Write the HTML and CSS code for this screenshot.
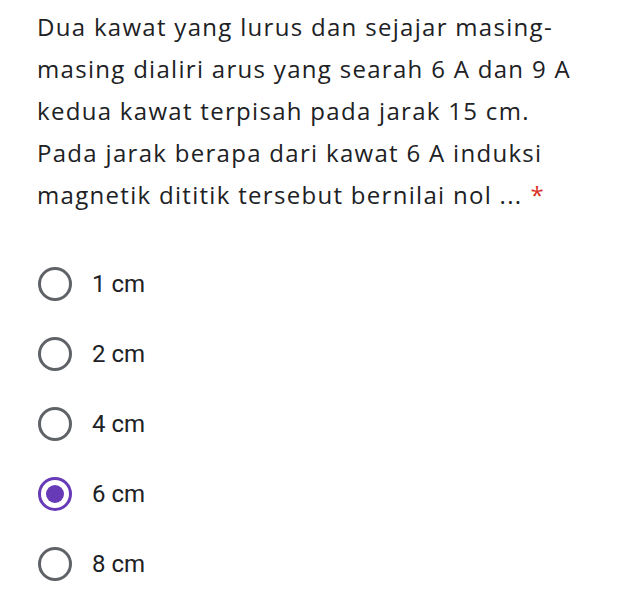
FILE: index.html
```html
<!DOCTYPE html>
<html lang="id">
<head>
    <meta charset="UTF-8">
    <meta name="viewport" content="width=device-width, initial-scale=1.0">
    <title>Soal</title>
    <link rel="stylesheet" href="styles.css">
</head>
<body>
    <div class="question">
        <div class="question-title">
            Dua kawat yang lurus dan sejajar masing-masing dialiri arus yang searah 6 A dan 9 A kedua kawat terpisah pada jarak 15 cm. Pada jarak berapa dari kawat 6 A induksi magnetik dititik tersebut bernilai nol ...<span class="required">*</span>
        </div>

        <div class="options">
            <label class="option">
                <span class="radio"></span>
                <span class="option-label">1 cm</span>
            </label>
            <label class="option">
                <span class="radio"></span>
                <span class="option-label">2 cm</span>
            </label>
            <label class="option">
                <span class="radio"></span>
                <span class="option-label">4 cm</span>
            </label>
            <label class="option">
                <span class="radio checked"></span>
                <span class="option-label">6 cm</span>
            </label>
            <label class="option">
                <span class="radio"></span>
                <span class="option-label">8 cm</span>
            </label>
        </div>
    </div>
</body>
</html>
```

FILE: styles.css
```css
* {
    margin: 0;
    padding: 0;
    box-sizing: border-box;
}

body {
    background: #fff;
    color: #202124;
    font-family: Roboto, 'Liberation Sans', sans-serif;
}

.question {
    padding: 6px 0 0 37px;
}

.question-title {
    width: 550px;
    font-family: 'Open Sans', 'Noto Sans', sans-serif;
    font-size: 24px;
    letter-spacing: 1.3px;
    line-height: 42px;
    color: #202124;
}

.required {
    color: #d93025;
    margin-left: 8px;
    letter-spacing: 0;
}

.options {
    margin-top: 33px;
    display: flex;
    flex-direction: column;
}

.option {
    display: flex;
    align-items: center;
    height: 70px;
}

.radio {
    position: relative;
    width: 34px;
    height: 34px;
    margin-left: 1px;
    border: 3px solid #5f6368;
    border-radius: 50%;
    flex-shrink: 0;
}

.radio.checked {
    border-color: #673ab7;
}

.radio.checked::after {
    content: "";
    position: absolute;
    top: 50%;
    left: 50%;
    width: 18px;
    height: 18px;
    margin: -9px 0 0 -9px;
    border-radius: 50%;
    background: #673ab7;
}

.option-label {
    margin-left: 20px;
    font-size: 24px;
    color: #202124;
}
```
